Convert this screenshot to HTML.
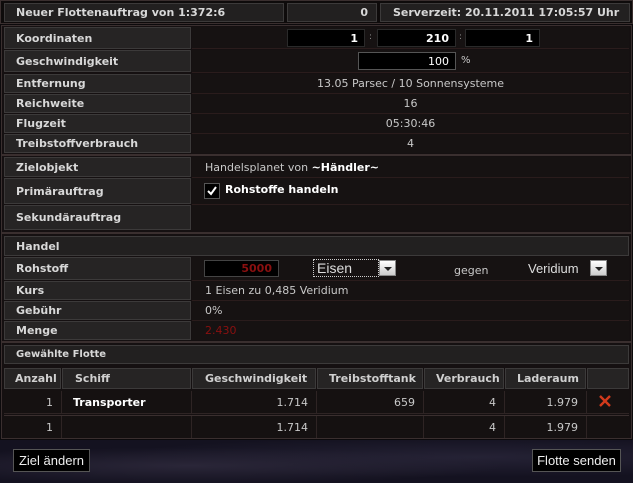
<!DOCTYPE html>
<html><head><meta charset="utf-8"><style>
*{margin:0;padding:0;box-sizing:border-box}
body{width:633px;height:483px;background:#0c0a0c;font-family:Verdana,"DejaVu Sans",sans-serif;font-size:11px;color:#c8c8c8;position:relative;overflow:hidden}
.a{position:absolute}
.bg{position:absolute;left:0;top:440px;width:633px;height:43px;background:
radial-gradient(ellipse at 30% 60%,#2a2638 0%,transparent 50%),
radial-gradient(ellipse at 75% 40%,#252235 0%,transparent 55%),#141220}
.frame{position:absolute;background:#151011;border:1px solid #3a2f2f}
.l{position:absolute;background:#262424;border:1px solid #3c3a3a;font-weight:bold;color:#d8d8d8;font-size:11px;padding-left:11px;display:flex;align-items:center}
.v{position:absolute;background:#161212;border-bottom:1px solid #2a1c1c;display:flex;align-items:center;justify-content:center;color:#c8c8c8}
.lf{justify-content:flex-start;padding-left:13px}
.h{position:absolute;background:#222020;border:1px solid #3c3a3a;font-weight:bold;color:#d8d8d8;display:flex;align-items:center}
.inp{position:absolute;background:#000;border:1px solid #2a2a2a;color:#fff;font-weight:bold;text-align:right;padding-right:6px;display:flex;align-items:center;justify-content:flex-end}
.th{position:absolute;top:368px;height:21px;background:#262424;border:1px solid #3c3a3a;font-weight:bold;color:#d0d0d0;display:flex;align-items:center;padding-left:10px}
.td{position:absolute;height:22px;background:#151111;border-right:1px solid #2e2424;display:flex;align-items:center;justify-content:flex-end;padding-right:8px;color:#c8c8c8}
.btn{position:absolute;background:#000;border:1px solid #555;color:#eee;font-family:"Liberation Sans",sans-serif;font-size:13px;display:flex;align-items:center;justify-content:center}
.dd{position:absolute;width:17px;height:16px;background:linear-gradient(#fff,#ccc);border:1px solid #888}
.dd:after{content:"";position:absolute;left:4px;top:6px;border-left:4px solid transparent;border-right:4px solid transparent;border-top:4px solid #222}
</style></head><body>
<div class="bg"></div>
<!-- top header -->
<div class="frame" style="left:0;top:0;width:633px;height:24px;background:#0e0b0b"></div>
<div class="h" style="left:4px;top:3px;width:280px;height:19px;padding-left:11px">Neuer Flottenauftrag von 1:372:6</div>
<div class="h" style="left:287px;top:3px;width:90px;height:19px;justify-content:flex-end;padding-right:8px">0</div>
<div class="h" style="left:380px;top:3px;width:250px;height:19px;padding-left:12px">Serverzeit: 20.11.2011 17:05:57 Uhr</div>

<!-- section 1 -->
<div class="frame" style="left:1px;top:25px;width:631px;height:130px"></div>
<div class="l" style="left:4px;top:27px;width:187px;height:22px">Koordinaten</div>
<div class="v" style="left:192px;top:27px;width:437px;height:22px"></div>
<div class="inp" style="left:287px;top:29px;width:78px;height:18px">1</div>
<div class="a" style="left:369px;top:32px;color:#888;font-size:9px">:</div>
<div class="inp" style="left:377px;top:29px;width:79px;height:18px">210</div>
<div class="a" style="left:459px;top:32px;color:#888;font-size:9px">:</div>
<div class="inp" style="left:465px;top:29px;width:75px;height:18px">1</div>
<div class="l" style="left:4px;top:50px;width:187px;height:22px">Geschwindigkeit</div>
<div class="v" style="left:192px;top:50px;width:437px;height:23px"></div>
<div class="inp" style="left:358px;top:52px;width:98px;height:18px;font-weight:normal;border-color:#555">100</div>
<div class="a" style="left:461px;top:55px;font-size:10px">%</div>
<div class="l" style="left:4px;top:74px;width:187px;height:19px">Entfernung</div>
<div class="v" style="left:192px;top:74px;width:437px;height:20px">13.05 Parsec / 10 Sonnensysteme</div>
<div class="l" style="left:4px;top:94px;width:187px;height:19px">Reichweite</div>
<div class="v" style="left:192px;top:94px;width:437px;height:20px">16</div>
<div class="l" style="left:4px;top:114px;width:187px;height:19px">Flugzeit</div>
<div class="v" style="left:192px;top:114px;width:437px;height:20px">05:30:46</div>
<div class="l" style="left:4px;top:134px;width:187px;height:19px">Treibstoffverbrauch</div>
<div class="v" style="left:192px;top:134px;width:437px;height:19px;border:none">4</div>

<!-- section 2 -->
<div class="frame" style="left:1px;top:155px;width:631px;height:78px"></div>
<div class="l" style="left:4px;top:157px;width:187px;height:20px">Zielobjekt</div>
<div class="v lf" style="left:192px;top:157px;width:437px;height:21px">Handelsplanet von&nbsp;<b style="color:#fff">~Händler~</b></div>
<div class="l" style="left:4px;top:178px;width:187px;height:26px">Primärauftrag</div>
<div class="v" style="left:192px;top:178px;width:437px;height:27px"></div>
<div class="a" style="left:204px;top:183px;width:16px;height:16px;background:#000;border:1px solid #555"><svg width="14" height="14" viewBox="0 0 14 14"><path d="M3 7 L6 10 L11 3" stroke="#fff" stroke-width="2" fill="none"/></svg></div>
<div class="a" style="left:225px;top:183px;font-weight:bold;color:#fff">Rohstoffe handeln</div>
<div class="l" style="left:4px;top:205px;width:187px;height:25px">Sekundärauftrag</div>
<div class="v" style="left:192px;top:205px;width:437px;height:25px;border:none"></div>

<!-- section 3 -->
<div class="frame" style="left:1px;top:233px;width:631px;height:109px"></div>
<div class="h" style="left:4px;top:236px;width:625px;height:20px;padding-left:11px">Handel</div>
<div class="l" style="left:4px;top:257px;width:187px;height:23px">Rohstoff</div>
<div class="v" style="left:192px;top:257px;width:437px;height:24px"></div>
<div class="inp" style="left:204px;top:260px;width:75px;height:17px;color:#8a1010;border-color:#444">5000</div>
<div class="a" style="left:313px;top:259px;width:66px;height:18px;border:1px dotted #ccc;font-family:'Liberation Sans',sans-serif;font-size:14px;color:#ddd;padding-left:3px;line-height:16px">Eisen</div>
<div class="dd" style="left:379px;top:260px"></div>
<div class="a" style="left:454px;top:264px">gegen</div>
<div class="a" style="left:528px;top:261px;font-family:'Liberation Sans',sans-serif;font-size:13px;color:#ddd">Veridium</div>
<div class="dd" style="left:590px;top:260px"></div>
<div class="l" style="left:4px;top:281px;width:187px;height:19px">Kurs</div>
<div class="v lf" style="left:192px;top:281px;width:437px;height:20px">1 Eisen zu 0,485 Veridium</div>
<div class="l" style="left:4px;top:301px;width:187px;height:19px">Gebühr</div>
<div class="v lf" style="left:192px;top:301px;width:437px;height:20px">0%</div>
<div class="l" style="left:4px;top:321px;width:187px;height:19px">Menge</div>
<div class="v lf" style="left:192px;top:321px;width:437px;height:19px;border:none;color:#8a1010">2.430</div>

<!-- section 4 -->
<div class="frame" style="left:1px;top:342px;width:631px;height:97px"></div>
<div class="h" style="left:4px;top:345px;width:625px;height:19px;padding-left:11px;font-size:10px">Gewählte Flotte</div>
<div class="th" style="left:4px;width:57px;padding-left:10px">Anzahl</div>
<div class="th" style="left:62px;width:129px;padding-left:12px">Schiff</div>
<div class="th" style="left:192px;width:124px;padding-left:12px">Geschwindigkeit</div>
<div class="th" style="left:317px;width:106px;padding-left:11px">Treibstofftank</div>
<div class="th" style="left:424px;width:80px;padding-left:11px">Verbrauch</div>
<div class="th" style="left:505px;width:81px;padding-left:11px">Laderaum</div>
<div class="th" style="left:587px;width:42px"></div>
<div class="a" style="left:4px;top:390px;width:625px;height:24px;background:#151111;border-bottom:1px solid #2e2424"></div>
<div class="td" style="left:4px;top:391px;width:58px">1</div>
<div class="td" style="left:62px;top:391px;width:130px;justify-content:flex-start;padding-left:11px;font-weight:bold;color:#fff">Transporter</div>
<div class="td" style="left:192px;top:391px;width:125px">1.714</div>
<div class="td" style="left:317px;top:391px;width:107px">659</div>
<div class="td" style="left:424px;top:391px;width:81px">4</div>
<div class="td" style="left:505px;top:391px;width:82px">1.979</div>
<svg class="a" style="left:599px;top:395px" width="12" height="12" viewBox="0 0 12 12"><path d="M1 1 L11 11 M11 1 L1 11" stroke="#d23a1c" stroke-width="2.4"/></svg>
<div class="a" style="left:4px;top:415px;width:625px;height:23px;background:#151111;border-top:1px solid #3a2f2f"></div>
<div class="td" style="left:4px;top:416px;width:58px">1</div>
<div class="td" style="left:62px;top:416px;width:130px"></div>
<div class="td" style="left:192px;top:416px;width:125px">1.714</div>
<div class="td" style="left:317px;top:416px;width:107px"></div>
<div class="td" style="left:424px;top:416px;width:81px">4</div>
<div class="td" style="left:505px;top:416px;width:82px">1.979</div>

<div class="btn" style="left:13px;top:449px;width:77px;height:23px">Ziel ändern</div>
<div class="btn" style="left:532px;top:449px;width:89px;height:23px">Flotte senden</div>
</body></html>
